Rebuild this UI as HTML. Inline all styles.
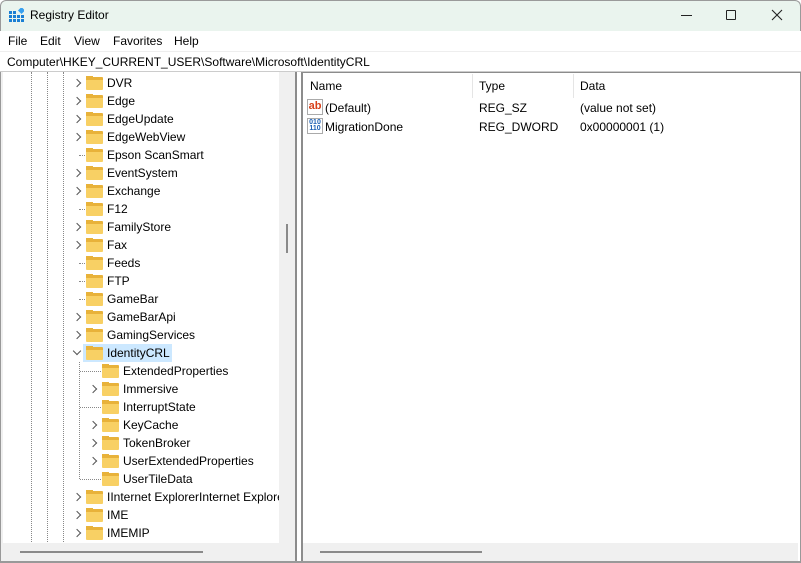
<!DOCTYPE html>
<html><head><meta charset="utf-8"><style>
*{margin:0;padding:0;box-sizing:border-box}
body{width:801px;height:563px;overflow:hidden;background:#fff;font-family:"Liberation Sans",sans-serif;font-size:12px;color:#000;position:relative}
.abs{position:absolute}
.title{left:0;top:0;width:801px;height:31px;background:#eaf4ee;border:1px solid #9a9a9a;border-bottom:none;border-radius:6px 6px 0 0}
.menu span{position:absolute;top:34px;font-size:12px}
.addr{left:0;top:51px;width:801px;height:21px;background:#fff;border-top:1px solid #eee;border-bottom:1px solid #ccc}
.tree{left:3px;top:72px;width:294px;height:490px;background:#fff;border-right:2px solid #8c8c8c;overflow:hidden}
.row{position:absolute;height:18px;line-height:18px;white-space:nowrap}
.fold{position:absolute;width:17px;height:13px;background:#f8d064;border-radius:1px;border-top:3px solid #e8b23a}
.fold:after{content:"";position:absolute;left:0;top:-4px;width:7px;height:2px;background:#e8b23a}
.vd{position:absolute;width:1px;border-left:1px dotted #888}
.hd{position:absolute;height:1px;border-top:1px dotted #888}
.chev{position:absolute;width:6px;height:6px;border-right:1.3px solid #555;border-bottom:1.3px solid #555;transform:rotate(-45deg)}
.chevd{transform:rotate(45deg)}
</style></head><body>
<div class="abs title"></div>
<svg class="abs" style="left:9px;top:8px" width="15" height="15" viewBox="0 0 15 15"><g fill="#1a7fd4"><rect x="0" y="3" width="3" height="3"/><rect x="4" y="3" width="3" height="3"/><rect x="0" y="7" width="3" height="3"/><rect x="4" y="7" width="3" height="3"/><rect x="8" y="7" width="3" height="3"/><rect x="0" y="11" width="3" height="3"/><rect x="4" y="11" width="3" height="3"/><rect x="8" y="11" width="3" height="3"/><rect x="12" y="11" width="3" height="3"/><rect x="12" y="7" width="3" height="3"/></g><rect x="10" y="0" width="5" height="5" fill="#37a0ef" transform="rotate(45 12.5 2.5)"/></svg>
<div class="abs" style="left:30px;top:8px;font-size:12px">Registry Editor</div>
<div class="abs" style="left:681px;top:15px;width:11px;height:1px;background:#222"></div>
<div class="abs" style="left:726px;top:10px;width:10px;height:10px;border:1px solid #222;border-radius:1px"></div>
<svg class="abs" style="left:771px;top:9px" width="12" height="12"><path d="M1 1L11 11M11 1L1 11" stroke="#222" stroke-width="1.1"/></svg>
<div class="menu"><span style="left:8px">File</span><span style="left:40px">Edit</span><span style="left:74px">View</span><span style="left:113px">Favorites</span><span style="left:174px">Help</span></div>
<div class="abs addr"></div>
<div class="abs" style="left:7px;top:55px">Computer\HKEY_CURRENT_USER\Software\Microsoft\IdentityCRL</div>
<div class="abs" style="left:0;top:72px;width:3px;height:491px;background:#f0f0f0;border-left:1px solid #999"></div>
<div class="abs tree">
<div class="vd" style="left:28px;top:0;height:470px"></div>
<div class="vd" style="left:44px;top:0;height:470px"></div>
<div class="vd" style="left:60px;top:0;height:470px"></div>
<div class="vd" style="left:76px;top:290px;height:117px"></div>
<div style="position:absolute;left:80px;top:272px;width:89px;height:18px;background:#cce8ff"></div>
<!-- rows: top = 2+18*i -->
<div class="chev" style="left:71px;top:8px"></div><div class="fold" style="left:83px;top:5px"></div><div class="row" style="left:104px;top:2px">DVR</div>
<div class="chev" style="left:71px;top:26px"></div><div class="fold" style="left:83px;top:23px"></div><div class="row" style="left:104px;top:20px">Edge</div>
<div class="chev" style="left:71px;top:44px"></div><div class="fold" style="left:83px;top:41px"></div><div class="row" style="left:104px;top:38px">EdgeUpdate</div>
<div class="chev" style="left:71px;top:62px"></div><div class="fold" style="left:83px;top:59px"></div><div class="row" style="left:104px;top:56px">EdgeWebView</div>
<div class="hd" style="left:76px;top:83px;width:6px"></div><div class="fold" style="left:83px;top:77px"></div><div class="row" style="left:104px;top:74px">Epson ScanSmart</div>
<div class="chev" style="left:71px;top:98px"></div><div class="fold" style="left:83px;top:95px"></div><div class="row" style="left:104px;top:92px">EventSystem</div>
<div class="chev" style="left:71px;top:116px"></div><div class="fold" style="left:83px;top:113px"></div><div class="row" style="left:104px;top:110px">Exchange</div>
<div class="hd" style="left:76px;top:137px;width:6px"></div><div class="fold" style="left:83px;top:131px"></div><div class="row" style="left:104px;top:128px">F12</div>
<div class="chev" style="left:71px;top:152px"></div><div class="fold" style="left:83px;top:149px"></div><div class="row" style="left:104px;top:146px">FamilyStore</div>
<div class="chev" style="left:71px;top:170px"></div><div class="fold" style="left:83px;top:167px"></div><div class="row" style="left:104px;top:164px">Fax</div>
<div class="hd" style="left:76px;top:191px;width:6px"></div><div class="fold" style="left:83px;top:185px"></div><div class="row" style="left:104px;top:182px">Feeds</div>
<div class="hd" style="left:76px;top:209px;width:6px"></div><div class="fold" style="left:83px;top:203px"></div><div class="row" style="left:104px;top:200px">FTP</div>
<div class="hd" style="left:76px;top:227px;width:6px"></div><div class="fold" style="left:83px;top:221px"></div><div class="row" style="left:104px;top:218px">GameBar</div>
<div class="chev" style="left:71px;top:242px"></div><div class="fold" style="left:83px;top:239px"></div><div class="row" style="left:104px;top:236px">GameBarApi</div>
<div class="chev" style="left:71px;top:260px"></div><div class="fold" style="left:83px;top:257px"></div><div class="row" style="left:104px;top:254px">GamingServices</div>
<div class="chev chevd" style="left:71px;top:276px"></div><div class="fold" style="left:83px;top:275px"></div><div class="row" style="left:104px;top:272px">IdentityCRL</div>
<div class="hd" style="left:77px;top:299px;width:21px"></div><div class="fold" style="left:99px;top:293px"></div><div class="row" style="left:120px;top:290px">ExtendedProperties</div>
<div class="chev" style="left:87px;top:314px"></div><div class="fold" style="left:99px;top:311px"></div><div class="row" style="left:120px;top:308px">Immersive</div>
<div class="hd" style="left:77px;top:335px;width:21px"></div><div class="fold" style="left:99px;top:329px"></div><div class="row" style="left:120px;top:326px">InterruptState</div>
<div class="chev" style="left:87px;top:350px"></div><div class="fold" style="left:99px;top:347px"></div><div class="row" style="left:120px;top:344px">KeyCache</div>
<div class="chev" style="left:87px;top:368px"></div><div class="fold" style="left:99px;top:365px"></div><div class="row" style="left:120px;top:362px">TokenBroker</div>
<div class="chev" style="left:87px;top:386px"></div><div class="fold" style="left:99px;top:383px"></div><div class="row" style="left:120px;top:380px">UserExtendedProperties</div>
<div class="hd" style="left:77px;top:407px;width:21px"></div><div class="fold" style="left:99px;top:401px"></div><div class="row" style="left:120px;top:398px">UserTileData</div>
<div class="chev" style="left:71px;top:422px"></div><div class="fold" style="left:83px;top:419px"></div><div class="row" style="left:104px;top:416px">IInternet ExplorerInternet Explorer</div>
<div class="chev" style="left:71px;top:440px"></div><div class="fold" style="left:83px;top:437px"></div><div class="row" style="left:104px;top:434px">IME</div>
<div class="chev" style="left:71px;top:458px"></div><div class="fold" style="left:83px;top:455px"></div><div class="row" style="left:104px;top:452px">IMEMIP</div>
<div style="position:absolute;left:276px;top:0;width:17px;height:472px;background:#f0f0f0"></div>
<div style="position:absolute;left:283px;top:152px;width:2px;height:29px;background:#8a8a8a"></div>
<div style="position:absolute;left:0;top:471px;width:293px;height:19px;background:#f0f0f0"></div>
<div style="position:absolute;left:17px;top:479px;width:183px;height:2px;background:#8a8a8a"></div>
</div>
<div class="abs" style="left:297px;top:72px;width:4px;height:491px;background:#fff"></div>
<div class="abs" style="left:301px;top:72px;width:500px;height:491px;border-left:2px solid #8c8c8c;border-top:1px solid #8c8c8c;border-right:1px solid #999"></div>
<div class="abs" style="left:310px;top:79px">Name</div>
<div class="abs" style="left:479px;top:79px">Type</div>
<div class="abs" style="left:580px;top:79px">Data</div>
<div class="abs" style="left:472px;top:74px;width:1px;height:24px;background:#e5e5e5"></div>
<div class="abs" style="left:573px;top:74px;width:1px;height:24px;background:#e5e5e5"></div>
<div class="abs" style="left:307px;top:99px;width:16px;height:16px;border:1px solid #aaa;background:#fff;color:#d8401a;font-weight:bold;font-size:11px;line-height:13px;text-align:center">ab</div>
<div class="abs" style="left:325px;top:101px">(Default)</div>
<div class="abs" style="left:479px;top:101px">REG_SZ</div>
<div class="abs" style="left:580px;top:101px">(value not set)</div>
<div class="abs" style="left:307px;top:118px;width:16px;height:16px;border:1px solid #aaa;background:#fff;color:#1a5fb4;font-weight:bold;font-size:7px;line-height:6px;text-align:center;padding-top:1px">010<br>110</div>
<div class="abs" style="left:325px;top:120px">MigrationDone</div>
<div class="abs" style="left:479px;top:120px">REG_DWORD</div>
<div class="abs" style="left:580px;top:120px">0x00000001 (1)</div>
<div class="abs" style="left:303px;top:543px;width:495px;height:18px;background:#f0f0f0"></div>
<div class="abs" style="left:320px;top:551px;width:162px;height:2px;background:#8a8a8a"></div>
<div class="abs" style="left:0;top:561px;width:801px;height:2px;background:#999"></div>
</body></html>
